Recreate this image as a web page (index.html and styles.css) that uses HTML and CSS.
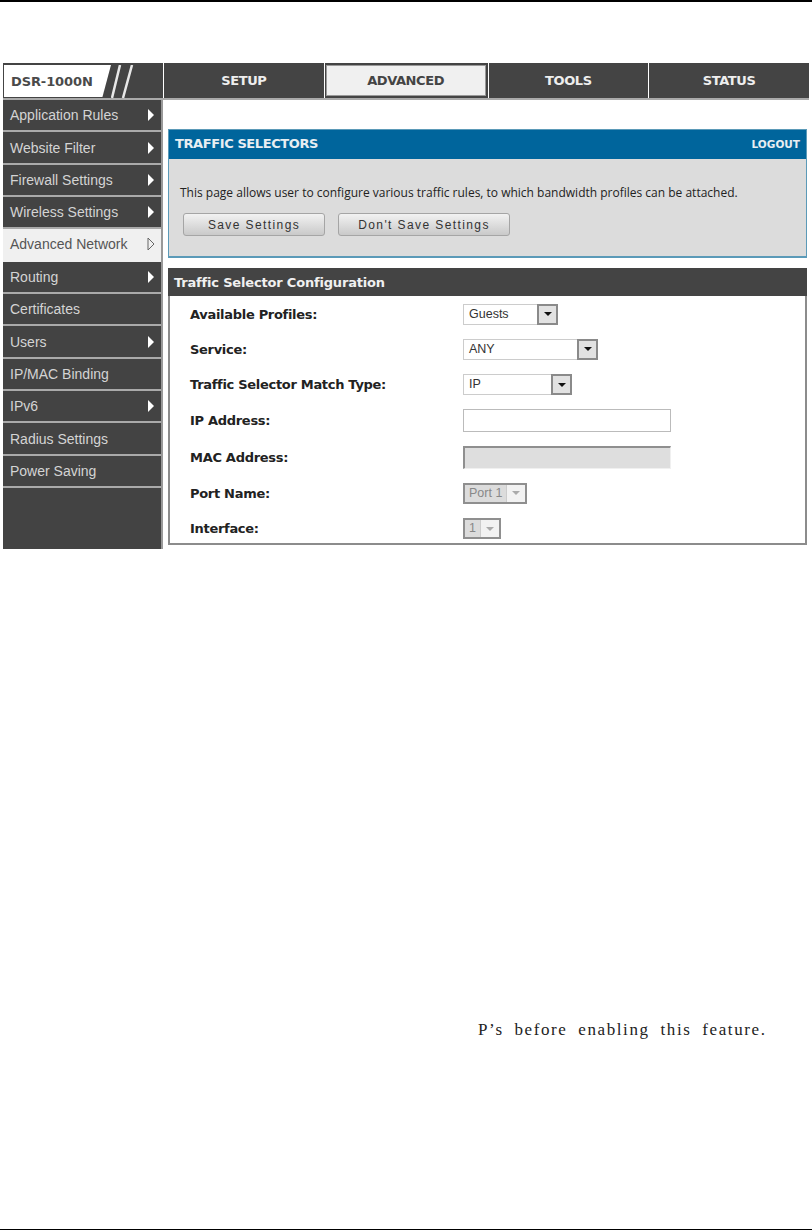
FILE: index.html
```html
<!DOCTYPE html>
<html lang="en">
<head>
    <meta charset="UTF-8">
    <meta name="viewport" content="width=device-width, initial-scale=1.0">
    <title>Traffic Selectors</title>
    <link rel="stylesheet" href="styles.css">
</head>
<body>
    <div class="figure">
        <div class="topnav">
            <div class="logo">
                <span class="logo-name">DSR-1000N</span>
                <svg class="logo-slashes" width="50" height="35" viewBox="0 0 50 35">
                    <path d="M9 0L1 33M21 0L12 33" stroke="#e8e8e8" stroke-width="2.5" fill="none"/>
                </svg>
            </div>
            <div class="tab">SETUP</div>
            <div class="tab active">ADVANCED</div>
            <div class="tab">TOOLS</div>
            <div class="tab">STATUS</div>
        </div>

        <div class="main">
            <div class="sidebar">
                <div class="side-item">Application Rules <svg class="arrow" width="8" height="14" viewBox="0 0 8 14"><path d="M1 1L7 7L1 13Z" fill="#fff"/></svg></div>
                <div class="side-item">Website Filter <svg class="arrow" width="8" height="14" viewBox="0 0 8 14"><path d="M1 1L7 7L1 13Z" fill="#fff"/></svg></div>
                <div class="side-item">Firewall Settings <svg class="arrow" width="8" height="14" viewBox="0 0 8 14"><path d="M1 1L7 7L1 13Z" fill="#fff"/></svg></div>
                <div class="side-item">Wireless Settings <svg class="arrow" width="8" height="14" viewBox="0 0 8 14"><path d="M1 1L7 7L1 13Z" fill="#fff"/></svg></div>
                <div class="side-item current">Advanced Network <svg class="arrow" width="8" height="14" viewBox="0 0 8 14"><path d="M1 1L7 7L1 13Z" fill="none" stroke="#666"/></svg></div>
                <div class="side-item">Routing <svg class="arrow" width="8" height="14" viewBox="0 0 8 14"><path d="M1 1L7 7L1 13Z" fill="#fff"/></svg></div>
                <div class="side-item">Certificates</div>
                <div class="side-item">Users <svg class="arrow" width="8" height="14" viewBox="0 0 8 14"><path d="M1 1L7 7L1 13Z" fill="#fff"/></svg></div>
                <div class="side-item">IP/MAC Binding</div>
                <div class="side-item">IPv6 <svg class="arrow" width="8" height="14" viewBox="0 0 8 14"><path d="M1 1L7 7L1 13Z" fill="#fff"/></svg></div>
                <div class="side-item">Radius Settings</div>
                <div class="side-item">Power Saving</div>
            </div>

            <div class="content">
                <div class="panel">
                    <div class="panel-head">
                        <span class="panel-title">TRAFFIC SELECTORS</span>
                        <span class="logout">LOGOUT</span>
                    </div>
                    <div class="panel-body">
                        <p class="intro">This page allows user to configure various traffic rules, to which bandwidth profiles can be attached.</p>
                        <div class="buttons">
                            <button class="btn btn-save">Save Settings</button>
                            <button class="btn btn-nosave">Don't Save Settings</button>
                        </div>
                    </div>
                </div>

                <div class="section">
                    <div class="section-head">Traffic Selector Configuration</div>
                    <div class="form">
                        <div class="form-row">
                            <label>Available Profiles:</label>
                            <div class="select w-profile"><span class="select-value">Guests</span><span class="select-btn"><i></i></span></div>
                        </div>
                        <div class="form-row">
                            <label>Service:</label>
                            <div class="select w-service"><span class="select-value">ANY</span><span class="select-btn"><i></i></span></div>
                        </div>
                        <div class="form-row">
                            <label>Traffic Selector Match Type:</label>
                            <div class="select w-match"><span class="select-value">IP</span><span class="select-btn"><i></i></span></div>
                        </div>
                        <div class="form-row">
                            <label>IP Address:</label>
                            <div class="textbox"></div>
                        </div>
                        <div class="form-row">
                            <label>MAC Address:</label>
                            <div class="textbox disabled"></div>
                        </div>
                        <div class="form-row">
                            <label>Port Name:</label>
                            <div class="select off w-port"><span class="select-value">Port 1</span><span class="select-btn"><i></i></span></div>
                        </div>
                        <div class="form-row">
                            <label>Interface:</label>
                            <div class="select off w-iface"><span class="select-value">1</span><span class="select-btn"><i></i></span></div>
                        </div>
                    </div>
                </div>
            </div>
        </div>
    </div>

    <p class="note">P’s before enabling this feature.</p>
    <div class="bottom-rule"></div>
</body>
</html>
```

FILE: styles.css
```css
* {
    box-sizing: border-box;
}
body {
    margin: 0;
    min-height: 1230px;
    display: flex;
    flex-direction: column;
    border-top: 2px solid #000;
    background: #fff;
    font-family: "Liberation Sans", Arial, sans-serif;
    color: #222;
}
.figure {
    width: 806px;
    margin: 61px 0 0 3px;
}

/* top bar */
.topnav {
    display: flex;
    gap: 1px;
    height: 37px;
    border-bottom: 2px solid #aaa;
}
.logo {
    width: 160px;
    flex: none;
    display: flex;
    background: #444;
    padding-top: 2px;
    padding-left: 1px;
}
.logo-name {
    width: 107px;
    height: 32px;
    padding-left: 7px;
    background: #fff;
    clip-path: polygon(0 0, 100% 0, 92% 100%, 0 100%);
    font-family: "DejaVu Sans", sans-serif;
    font-weight: bold;
    font-size: 13px;
    line-height: 34px;
    letter-spacing: -0.1px;
    color: #4a4a4a;
}
.logo-slashes {
    flex: none;
}
.tab {
    flex: 1;
    background: #444;
    color: #eee;
    font-family: "DejaVu Sans", sans-serif;
    font-weight: bold;
    font-size: 13px;
    letter-spacing: -0.4px;
    line-height: 36px;
    text-align: center;
}
.tab.active {
    background: #f0f0f0;
    color: #444;
    border: 2px solid #444;
    border-left-width: 1px;
    line-height: 32px;
    box-shadow: inset 0 0 0 1px #999;
}

.main {
    display: flex;
    height: 449px;
}

/* left menu */
.sidebar {
    width: 160px;
    flex: none;
    background: #434343;
    border-right: 2px solid #999;
}
.side-item {
    height: 32.35px;
    padding: 0 6px 0 7px;
    display: flex;
    align-items: center;
    justify-content: space-between;
    border-bottom: 2px solid #aaa;
    color: #d4d4d4;
    font-size: 14px;
}
.side-item.current {
    background: #f0f0f0;
    color: #555;
    border-bottom: none;
    padding-bottom: 3px;
}
.arrow {
    flex: none;
}

.content {
    flex: 1;
    padding: 29px 2px 0 5px;
}

/* page title box */
.panel {
    height: 129px;
    background: #dcdcdc;
    border: 1px solid #5b9ab8;
    border-bottom-width: 2px;
}
.panel-head {
    height: 29px;
    padding: 0 6px 2px;
    background: #00659c;
    color: #e8eef2;
    display: flex;
    align-items: center;
    justify-content: space-between;
    font-family: "DejaVu Sans", sans-serif;
    font-weight: bold;
}
.panel-title {
    font-size: 13px;
    letter-spacing: -0.4px;
}
.logout {
    font-size: 10.5px;
}
.panel-body {
    padding: 26px 11px 0;
}
.intro {
    margin: 0;
    font-family: "Open Sans", sans-serif;
    font-size: 12px;
    line-height: 16px;
    color: #222;
}
.buttons {
    display: flex;
    gap: 13px;
    margin-top: 12px;
    padding-left: 3px;
}
.btn {
    height: 23px;
    padding: 0;
    border: 1px solid #a5a5a5;
    border-radius: 3px;
    background: linear-gradient(#f2f2f2, #c9c9c9);
    font-family: "Liberation Sans", sans-serif;
    font-size: 12px;
    letter-spacing: 1.4px;
    color: #333;
}
.btn-save {
    width: 142px;
}
.btn-nosave {
    width: 172px;
}

/* form */
.section {
    margin-top: 10px;
    height: 277px;
    border: 2px solid #8c8c8c;
    border-top: none;
}
.section-head {
    height: 28px;
    margin: 0 -2px;
    padding: 0 6px;
    background: #444;
    color: #f0f0f0;
    font-family: "DejaVu Sans", sans-serif;
    font-weight: bold;
    font-size: 13px;
    letter-spacing: -0.18px;
    line-height: 29px;
}
.form {
    padding: 1px 0 0 20px;
}
.form-row {
    display: flex;
    align-items: center;
    height: 35.5px;
}
.form-row:first-child {
    height: 34.5px;
}
.form-row:nth-child(4) {
    height: 36.5px;
}
.form-row:nth-child(5) {
    height: 36.5px;
}
.form-row label {
    width: 273px;
    flex: none;
    font-family: "DejaVu Sans", sans-serif;
    font-weight: bold;
    font-size: 13px;
    letter-spacing: -0.3px;
    color: #222;
}
.select {
    display: flex;
    height: 21px;
    background: #fff;
    border: 1px solid #ccc;
    font-size: 12.5px;
}
.select-value {
    flex: 1;
    padding-left: 5px;
    line-height: 19px;
    color: #333;
}
.select-btn {
    width: 21px;
    display: flex;
    align-items: center;
    justify-content: center;
    background: #e2e2e2;
    border: 2px solid #8a8a8a;
    margin: -1px -1px -1px 0;
}
.select-btn i {
    border-top: 4px solid #111;
    border-left: 4px solid transparent;
    border-right: 4px solid transparent;
}
.w-profile {
    width: 95px;
}
.w-service {
    width: 135px;
}
.w-match {
    width: 109px;
}
.w-port {
    width: 64px;
}
.w-iface {
    width: 38px;
}
.select.off {
    background: #dcdcdc;
    border: 2px solid #8f8f8f;
}
.select.off .select-value {
    padding-left: 4px;
    line-height: 17px;
    color: #888;
}
.select.off .select-btn {
    width: 19px;
    margin: 0;
    background: #f2f2f2;
    border: none;
    border-left: 1px solid #ccc;
}
.select.off .select-btn i {
    border-top-color: #aaa;
}
.textbox {
    width: 208px;
    height: 23px;
    background: #fff;
    border: 1px solid #bbb;
}
.textbox.disabled {
    background: #dedede;
    border: 1px solid #f0f0f0;
    border-top: 2px solid #8f8f8f;
    border-left: 2px solid #8f8f8f;
}

/* leftover page text */
.note {
    margin: 471px 0 0 478px;
    font-family: "Liberation Serif", serif;
    font-size: 17px;
    line-height: 20px;
    letter-spacing: 1.6px;
    word-spacing: 5px;
    color: #222;
}
.bottom-rule {
    margin-top: auto;
    height: 1px;
    background: #000;
}
```
